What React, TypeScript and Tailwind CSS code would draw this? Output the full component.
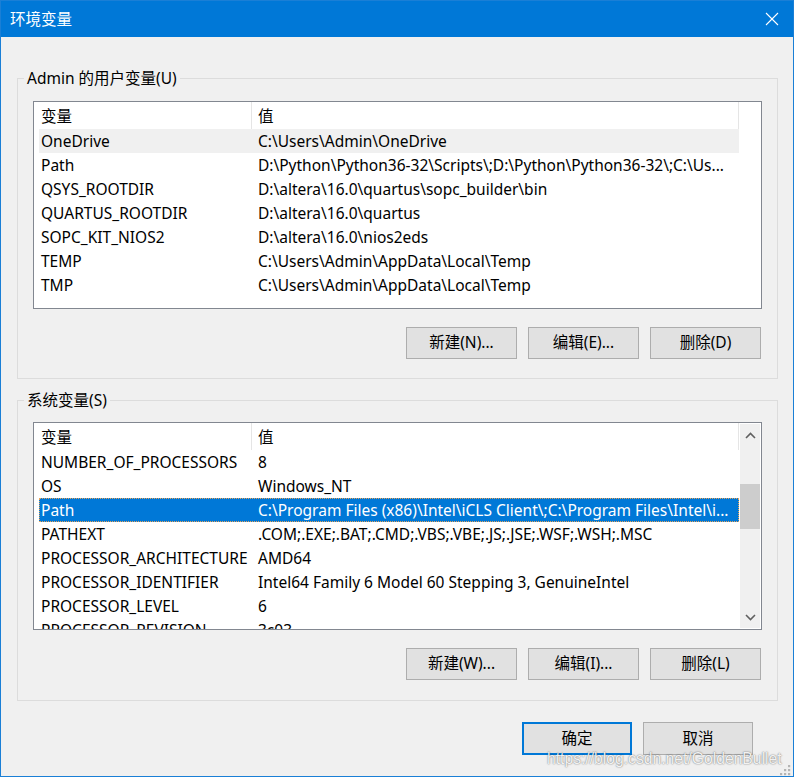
import React from "react";

const userRows: [string, string][] = [
  ["OneDrive", "C:\\Users\\Admin\\OneDrive"],
  ["Path", "D:\\Python\\Python36-32\\Scripts\\;D:\\Python\\Python36-32\\;C:\\Us..."],
  ["QSYS_ROOTDIR", "D:\\altera\\16.0\\quartus\\sopc_builder\\bin"],
  ["QUARTUS_ROOTDIR", "D:\\altera\\16.0\\quartus"],
  ["SOPC_KIT_NIOS2", "D:\\altera\\16.0\\nios2eds"],
  ["TEMP", "C:\\Users\\Admin\\AppData\\Local\\Temp"],
  ["TMP", "C:\\Users\\Admin\\AppData\\Local\\Temp"],
];

const sysRows: [string, string][] = [
  ["NUMBER_OF_PROCESSORS", "8"],
  ["OS", "Windows_NT"],
  ["Path", "C:\\Program Files (x86)\\Intel\\iCLS Client\\;C:\\Program Files\\Intel\\i..."],
  ["PATHEXT", ".COM;.EXE;.BAT;.CMD;.VBS;.VBE;.JS;.JSE;.WSF;.WSH;.MSC"],
  ["PROCESSOR_ARCHITECTURE", "AMD64"],
  ["PROCESSOR_IDENTIFIER", "Intel64 Family 6 Model 60 Stepping 3, GenuineIntel"],
  ["PROCESSOR_LEVEL", "6"],
  ["PROCESSOR_REVISION", "3c03"],
];

function Header() {
  return (
    <div className="ml-[5px] w-[700px] h-[27px] flex shrink-0">
      <div className="w-[213px] h-full border-r border-[#e5e5e5] pl-[2px] pt-[3px] flex items-center">变量</div>
      <div className="w-[487px] h-full border-r border-[#e5e5e5] pl-[6px] pt-[3px] flex items-center">值</div>
    </div>
  );
}

function Row({ name, value, kind }: { name: string; value: string; kind?: "hover" | "sel" }) {
  const bg =
    kind === "sel"
      ? "bg-[#0078d7] text-white outline outline-1 outline-dotted outline-[#e7a45a] -outline-offset-1"
      : kind === "hover"
      ? "bg-[#f0f0f0]"
      : "";
  return (
    <div className={`ml-[5px] w-[700px] h-[24px] flex shrink-0 leading-[25px] whitespace-nowrap ${bg}`}>
      <div className="w-[213px] pl-[2px] overflow-hidden">{name}</div>
      <div className="w-[487px] pl-[6px] overflow-hidden">{value}</div>
    </div>
  );
}

function Btn({ children }: { children: React.ReactNode }) {
  return (
    <div className="w-[111px] h-[32px] flex items-center justify-center bg-[#e1e1e1] border border-[#adadad]">
      {children}
    </div>
  );
}

function Chevron({ up }: { up?: boolean }) {
  return (
    <svg width="11" height="7" viewBox="0 0 11 7">
      <polyline
        points={up ? "1,6 5.5,1.5 10,6" : "1,1 5.5,5.5 10,1"}
        fill="none"
        stroke="#606060"
        strokeWidth="1.6"
      />
    </svg>
  );
}

function Group({ label, children, first }: { label: string; children: React.ReactNode; first?: boolean }) {
  return (
    <div className={`relative border border-[#dcdcdc] px-[15px] pt-[21px] ${first ? "mt-[41px] pb-[19px]" : "mt-[21px] pb-[20px]"}`}>
      <span className="absolute left-[6px] -top-[11px] px-[3px] leading-[20px] bg-[#f0f0f0]">{label}</span>
      {children}
    </div>
  );
}

export default function App() {
  return (
    <div className="relative w-[794px] h-[777px] bg-[#f0f0f0] border border-[#1a7fd6] flex flex-col text-[15.5px] text-black font-['Noto_Sans','Noto_Sans_CJK_SC',sans-serif] overflow-hidden">
      {/* title bar */}
      <div className="h-[36px] shrink-0 bg-[#0078d7] flex items-center justify-between pl-[9px] pr-[14px] text-white">
        <span className="leading-[20px] pb-[1px]">环境变量</span>
        <svg width="14" height="14" viewBox="0 0 14 14">
          <line x1="1" y1="1" x2="13" y2="13" stroke="white" strokeWidth="1.1" />
          <line x1="13" y1="1" x2="1" y2="13" stroke="white" strokeWidth="1.1" />
        </svg>
      </div>

      <div className="pl-[16px] pr-[15px] flex flex-col">
        <Group label="Admin 的用户变量(U)" first>
          <div className="h-[208px] border border-[#828790] bg-white flex flex-col overflow-hidden mt-[1px]">
            <Header />
            {userRows.map(([n, v], i) => (
              <Row key={n + i} name={n} value={v} kind={i === 0 ? "hover" : undefined} />
            ))}
          </div>
          <div className="mt-[18px] mr-[1px] flex justify-end gap-[11px]">
            <Btn>新建(N)...</Btn>
            <Btn>编辑(E)...</Btn>
            <Btn>删除(D)</Btn>
          </div>
        </Group>

        <Group label="系统变量(S)">
          <div className="h-[208px] border border-[#828790] bg-white flex overflow-hidden">
            <div className="flex-1 flex flex-col overflow-hidden">
              <Header />
              {sysRows.map(([n, v], i) => (
                <Row key={n + i} name={n} value={v} kind={i === 2 ? "sel" : undefined} />
              ))}
            </div>
            <div className="w-[20px] my-[1px] mr-[1px] bg-[#f0f0f0] flex flex-col shrink-0">
              <div className="h-[22px] flex items-center justify-center">
                <Chevron up />
              </div>
              <div className="h-[38px]" />
              <div className="h-[45px] bg-[#cdcdcd]" />
              <div className="flex-1" />
              <div className="h-[22px] flex items-center justify-center">
                <Chevron />
              </div>
            </div>
          </div>
          <div className="mt-[18px] mr-[1px] flex justify-end gap-[11px]">
            <Btn>新建(W)...</Btn>
            <Btn>编辑(I)...</Btn>
            <Btn>删除(L)</Btn>
          </div>
        </Group>

        <div className="mt-[21px] mr-[25px] flex justify-end gap-[11px]">
          <div className="w-[110px] h-[33px] flex items-center justify-center bg-[#e1e1e1] border-2 border-[#0078d7]">确定</div>
          <div className="w-[110px] h-[33px] flex items-center justify-center bg-[#e1e1e1] border border-[#adadad]">取消</div>
        </div>
      </div>

      {/* watermark */}
      <span className="absolute left-[546px] top-[750px] leading-[16px] text-[15.7px] font-['Liberation_Sans',sans-serif] text-white/90 [text-shadow:0_0_1.5px_rgba(0,0,0,0.7)] whitespace-nowrap">
        https://blog.csdn.net/GoldenBullet
      </span>
      {/* resize grip */}
      <svg className="absolute left-[779px] top-[764px]" width="12" height="11" viewBox="0 0 12 11">
        <rect x="8" y="0" width="2.2" height="2.2" fill="#b4b4b4" />
        <rect x="4" y="4" width="2.2" height="2.2" fill="#b4b4b4" />
        <rect x="8" y="4" width="2.2" height="2.2" fill="#b4b4b4" />
        <rect x="0" y="8" width="2.2" height="2.2" fill="#b4b4b4" />
        <rect x="4" y="8" width="2.2" height="2.2" fill="#b4b4b4" />
        <rect x="8" y="8" width="2.2" height="2.2" fill="#b4b4b4" />
      </svg>
    </div>
  );
}
